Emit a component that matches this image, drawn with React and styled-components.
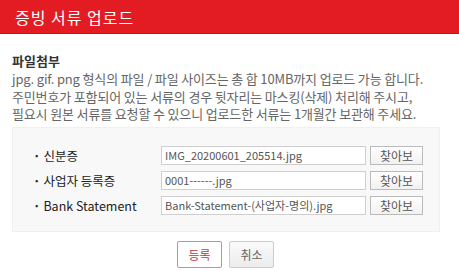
import React from "react";
import styled, { createGlobalStyle } from "styled-components";

const GlobalStyle = createGlobalStyle`
  body {
    margin: 0;
    background: #fff;
    font-family: "Noto Sans CJK KR", "Liberation Sans", sans-serif;
  }
`;

const files = [
  { label: "신분증", name: "IMG_20200601_205514.jpg" },
  { label: "사업자 등록증", name: "0001------.jpg" },
  { label: "Bank Statement", name: "Bank-Statement-(사업자-명의).jpg" },
];

export default function App() {
  return (
    <Page>
      <GlobalStyle />
      <Header>증빙 서류 업로드</Header>
      <Content>
        <SectionTitle>파일첨부</SectionTitle>
        <Notice>
          jpg. gif. png 형식의 파일 / 파일 사이즈는 총 합 10MB까지 업로드 가능 합니다.
          <br />
          주민번호가 포함되어 있는 서류의 경우 뒷자리는 마스킹(삭제) 처리해 주시고,
          <br />
          필요시 원본 서류를 요청할 수 있으니 업로드한 서류는 1개월간 보관해 주세요.
        </Notice>
        <FileBox>
          {files.map((f) => (
            <FileRow key={f.label}>
              <Label>{f.label}</Label>
              <FileName readOnly value={f.name} />
              <FindButton type="button">찾아보</FindButton>
            </FileRow>
          ))}
        </FileBox>
        <Actions>
          <ActionButton type="button" primary>
            등록
          </ActionButton>
          <ActionButton type="button">취소</ActionButton>
        </Actions>
      </Content>
    </Page>
  );
}

const Page = styled.div`
  width: 459px;
  height: 271px;
  overflow: hidden;
`;

const Header = styled.div`
  height: 34px;
  background: #e31b23;
  color: #fff;
  font-size: 16px;
  letter-spacing: 1px;
  line-height: 34px;
  padding-left: 15px;
  border-bottom: 1px solid #c9141b;
  box-sizing: border-box;
`;

const Content = styled.div`
  padding: 17px 19px 0 12px;
`;

const SectionTitle = styled.div`
  font-size: 13px;
  font-weight: bold;
  color: #333;
  line-height: 19px;
`;

const Notice = styled.p`
  margin: 0;
  font-size: 13px;
  line-height: 17.5px;
  color: #666;
  letter-spacing: -0.15px;
  white-space: nowrap;
`;

const FileBox = styled.div`
  margin-top: 4px;
  background: #f8f8f8;
  border: 1px solid #f0f0f0;
  padding: 18px 0 16px 20px;
  display: flex;
  flex-direction: column;
  gap: 6px;
`;

const FileRow = styled.div`
  display: grid;
  grid-template-columns: 124px 205px 53px;
  column-gap: 4px;
  align-items: center;
  height: 19px;
`;

const Label = styled.div`
  font-size: 12.5px;
  color: #222;
  &::before {
    content: "·";
    margin-right: 3px;
    font-weight: bold;
  }
`;

const FileName = styled.input`
  box-sizing: border-box;
  height: 19px;
  width: 205px;
  border: 1px solid #cfcfcf;
  background: #fff;
  padding: 0 3px;
  font-family: inherit;
  font-size: 11px;
  color: #555;
  outline: none;
`;

const FindButton = styled.button`
  box-sizing: border-box;
  height: 19px;
  border: 1px solid #bbb;
  background: linear-gradient(#fff, #f1f1f1);
  font-family: inherit;
  font-size: 12px;
  color: #555;
  padding: 0;
  cursor: pointer;
`;

const Actions = styled.div`
  display: flex;
  justify-content: center;
  gap: 7px;
  margin-top: 9px;
  padding-right: 1px;
`;

const ActionButton = styled.button`
  box-sizing: border-box;
  width: 45px;
  height: 27px;
  border: 1px solid ${(p) => (p.primary ? "#d9878a" : "#cccccc")};
  border-radius: 2px;
  background: ${(p) => (p.primary ? "#fff" : "linear-gradient(#fafafa, #ececec)")};
  color: ${(p) => (p.primary ? "#c9343a" : "#666")};
  font-family: inherit;
  font-size: 12px;
  padding: 0;
  cursor: pointer;
`;
